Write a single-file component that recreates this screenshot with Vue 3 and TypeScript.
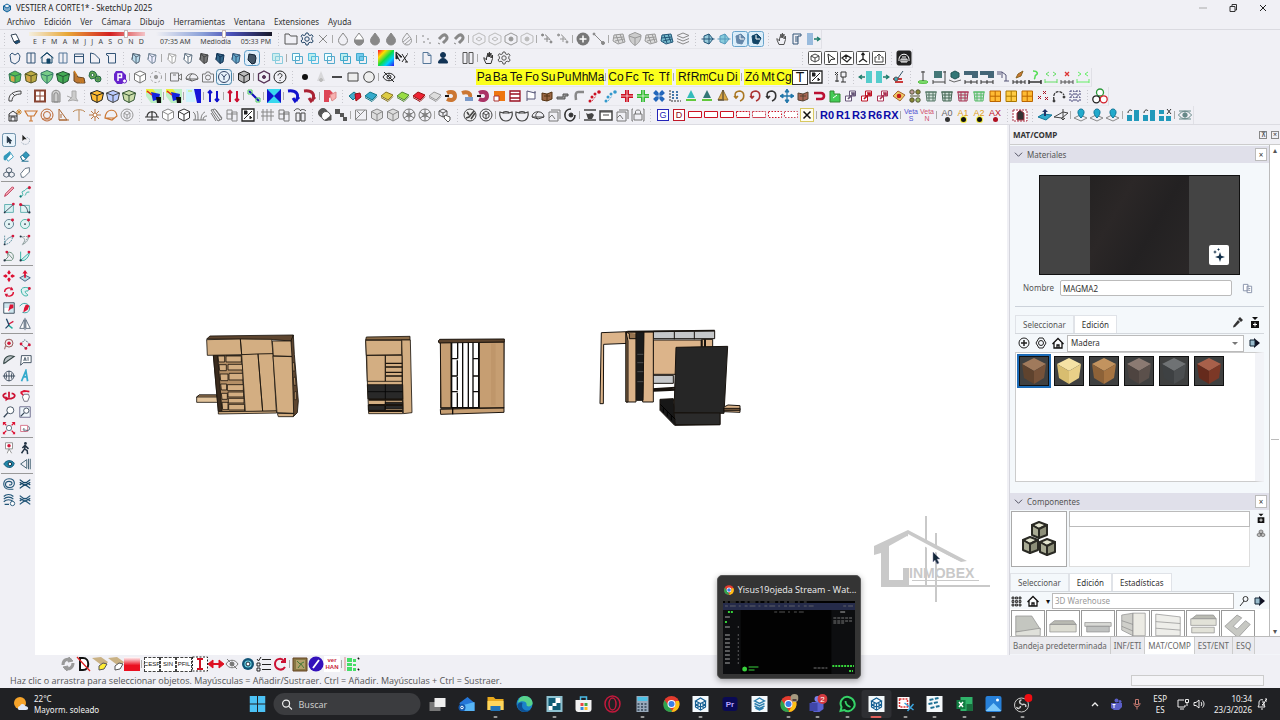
<script setup lang="ts">
import { ref } from 'vue'

interface Tool {
  kind: 'icon' | 'sep' | 'grip' | 'wide' | 'label'
  name: string
  stroke: string
  fill: string
  cls: string
}

/* 16 x 16 glyphs; stroke and fill come from the token that names them */
const glyphs: Record<string, string> = {
  cube: '<path d="M8 2l5.5 2.5v6.500L8 14l-5.500-3V4.500z"/><path fill="none" d="M2.500 4.500L8 7.500l5.500-3M8 7.500V14"/>',
  shade: '<path d="M5 3.500l7 1.500-1 7-3 1.500-4-4z"/><path fill="none" d="M4 9.500l1-6 3 3.500 4-2M8 7v6.500"/>',
  shadebox: '<rect x=".5" y=".5" width="15" height="15" rx="3" fill="#e2effa" stroke="#5c9cc8"/><path d="M5 4l6 1 1 3-1 5-3 1-4-4z"/>',
  sun: '<path d="M4 4l5-1 3 6-5 2z" fill="#fff"/><path d="M7 11l5-2 1 2-4 2z" fill="#14507c"/>',
  folder: '<path fill="none" d="M2 13V3h4l1.500 2H14v8z"/>',
  gear: '<circle cx="8" cy="8" r="2.200" fill="none"/><path fill="none" d="M7 2h2l.5 1.800 1.500.7 1.800-.8 1.200 1.600-1.200 1.500v2l1.400 1-1.200 2-1.800-.6L9.500 12 9 14H7l-.5-2-1.500-.8-1.800.6-1.200-2 1.400-1v-2L2.200 5.300l1-1.600L5 4.500l1.500-.7z"/>',
  x: '<path d="M4 4l8 8M12 4l-8 8"/>',
  xbox: '<rect x="1.500" y="1.500" width="13" height="13" fill="#fffdf0" stroke="#d8c860"/><path stroke-width="1.500" d="M4.500 4.500l7 7M11.500 4.500l-7 7"/>',
  drop: '<path fill="none" d="M8 2c2 3 4.500 5 4.500 7.500a4.500 4.500 0 0 1-9 0C3.500 7 6 5 8 2z"/>',
  drophalf: '<path fill="#fff" d="M8 2c2 3 4.500 5 4.500 7.500a4.500 4.500 0 0 1-9 0C3.500 7 6 5 8 2z"/><path d="M3.500 9h9c0 3-2 5-4.500 5s-4.500-2-4.500-5z"/>',
  dropfull: '<path d="M8 2c2 3 4.500 5 4.500 7.500a4.500 4.500 0 0 1-9 0C3.500 7 6 5 8 2z"/>',
  drophatch: '<path fill="none" d="M8 2c2 3 4.500 5 4.500 7.500a4.500 4.500 0 0 1-9 0C3.500 7 6 5 8 2zM4 11l6-5M6 13l6-5"/>',
  spots: '<g stroke="none"><circle cx="4" cy="5" r="1"/><circle cx="9" cy="8" r="1"/><circle cx="5" cy="11" r="1"/><circle cx="11" cy="12" r="1"/></g>',
  magnet: '<path fill="none" stroke-width="3" d="M4 8l3-3c3-3 7 1 4 4l-3 3"/><path d="M3 12l2 1"/>',
  hex: '<path fill="none" d="M8 2l6 3v6l-6 3-6-3V5z"/><path fill="none" d="M5 8l3-2 3 2-3 2z"/>',
  hexdot: '<path fill="none" d="M8 2l6 3v6l-6 3-6-3V5z"/><circle cx="8" cy="8" r="2"/>',
  node: '<path fill="none" stroke-dasharray="2 1" d="M3 4h4l5 6"/><path d="M8 5v6M5 8h6"/><circle cx="3.500" cy="4" r="1"/><circle cx="12" cy="11" r="1"/>',
  plus: '<circle cx="8" cy="8" r="6.500" stroke="none"/><path stroke="#fff" stroke-width="1.500" d="M8 4.500v7M4.500 8h7"/>',
  line: '<path d="M3 3l9 9"/><circle cx="3" cy="3" r="1"/><circle cx="12" cy="12" r="1.500"/>',
  mesh: '<path d="M3 4l9-1 2 8-7 2-5-3z"/><path fill="none" d="M2.500 7l10-1M5 4l3 8M9 3l3 8M4 10l9-2"/>',
  layers: '<path fill="none" d="M8 2l6 2.500L8 7 2 4.500zM2 7.500L8 10l6-2.500M2 10.500L8 13l6-2.500"/>',
  plane: '<path d="M4 5l5-2 4 5-4 5-5-2z"/><path fill="none" d="M1.500 8h13M9 3v10"/>',
  planebox: '<rect x=".5" y=".5" width="15" height="15" rx="2" fill="#dceefa" stroke="#6aa5cc"/><path d="M4 5l5-2 4 4-3 6-5-1z"/><path d="M8 4v4h4" stroke="#fff"/>',
  scroll: '<path fill="none" d="M4 3h8v2H9v8H4zM6 6h3M6 8h3M6 10h3"/>',
  hand: '<path fill="none" d="M4 9l2 4.500h5l1.500-5V5l-1.500 3V3L9.500 7V2L8 7V3L6.500 8v2L4 7.500z"/>',
  house: '<path fill="none" d="M3 7l5-4 5 4v6H3zM1.500 8L8 2.500 14.500 8"/><path d="M8 13V9h3v4z"/>',
  view: '<path fill="none" d="M3.500 4h9v9h-9zM3.500 6.500h9"/>',
  viewl: '<path fill="none" d="M4 3h8v10H4zM8 3v10"/>',
  iso: '<path fill="none" d="M3 5l2-2 3 2 3-2 2 3-1 5-4 3-4-2z"/>',
  chamfer: '<path fill="none" d="M3.500 13V3l4 1 5 5v4z"/>',
  corner: '<path fill="none" d="M3.500 5V3.500h9v9.500h-7V6z"/>',
  boolean: '<path d="M3.500 3.500h7v7h-7z"/><path fill="none" d="M6.500 6.500h7v7h-7z"/>',
  rainbow: '<defs><linearGradient id="rb" x2="1" y2="1"><stop stop-color="#f03"/><stop offset=".25" stop-color="#fd0"/><stop offset=".5" stop-color="#1d4"/><stop offset=".72" stop-color="#0cf"/><stop offset="1" stop-color="#31e"/></linearGradient></defs><path stroke="none" fill="url(#rb)" d="M0 0h16v16H0z"/>',
  arrows: '<path d="M2 2v7l2-1 2 3M2 2l6 5H6"/><path fill="none" d="M8 4l5 8M8 12l5-7M11 12h3M13 4h1"/>',
  page: '<path fill="none" d="M4 2.500h5l3 3v8H4zM9 2.500v3h3"/>',
  person: '<circle cx="8" cy="5" r="2.500"/><path d="M3.500 13c0-6 9-6 9 0z"/>',
  mirror: '<path fill="none" d="M3 2.500h4v11H3zM9 2.500h4v11H9z"/>',
  bcube: '<rect x="1.500" y="1.500" width="13" height="13" rx="1" fill="#fff" stroke="#555"/><path fill="none" d="M8 4l4 2v4l-4 2-4-2V6zM4 6l4 2 4-2M8 8v4"/>',
  bcursor: '<rect x="1.500" y="1.500" width="13" height="13" rx="1" fill="#fff" stroke="#555"/><path fill="none" d="M5 4l7 5-4 .5L6 13z"/>',
  bpaint: '<rect x="1.500" y="1.500" width="13" height="13" rx="1" fill="#fff" stroke="#555"/><path fill="none" stroke-width="1.300" d="M3 8l4-3 5 3-4 4zM7 5v4"/>',
  baxes: '<rect x="1.500" y="1.500" width="13" height="13" rx="1" fill="#fff" stroke="#555"/><path fill="none" stroke-width="1.300" d="M8 3v6l-4 3M8 9l4 3M6.500 5L8 3l1.500 2"/>',
  bshare: '<rect x="1.500" y="1.500" width="13" height="13" rx="1" fill="#fff" stroke="#555"/><path fill="none" d="M6 7H4v5h8V7h-2M8 10V4M6 6l2-2 2 2"/>',
  gauge: '<rect x="1" y="1" width="14" height="14" rx="1.500"/><path stroke="#fff" fill="none" d="M3 11c-1-9 11-9 10 0M5 12V9h6v3zM7 9v3M9 9v3M6 7h4"/>',
  box3: '<path d="M1.500 5L8 2.500 14.500 5 13 12l-5 2.500L3 12z"/><path fill="none" d="M1.500 5L8 7.500 14.500 5M8 7.500v7"/>',
  openbox: '<path d="M2 5l6-3 6 3-1 7-5 2-5-2z"/><path fill="#d9a54a" stroke="none" d="M4 7l4 1v5l-4-1z"/><path fill="none" d="M2 5l6 2 6-2M8 7v7"/>',
  shield: '<path d="M8 1.500L14 4c0 5-2 8-6 10.500C4 12 2 9 2 4z"/><path fill="none" d="M2 5l6 2 6-2M8 7v7"/>',
  broom: '<path d="M3 3l4 5 6 1 1 5H6L3 12z"/><path stroke="#c77b22" stroke-width="1.500" d="M3 2l3 5M8 9l2 5M11 9l1 5"/>',
  gears: '<path d="M5 2l3 1 2 3-2 3-4 1-2-3 1-4z"/><circle cx="11" cy="10" r="3"/><circle cx="5.500" cy="6" r="1.500" fill="#fff"/><circle cx="11" cy="10" r="1" fill="#fff"/>',
  plogo: '<path stroke="none" d="M4 2h6l4 4v5l-4 4H5l-3-4V5z"/><path stroke="#fff" fill="none" stroke-width="1.500" d="M6 12V5h3.500v3.500H6"/><circle cx="12.500" cy="12" r="2" fill="#fff" stroke="#6a22c8"/>',
  target: '<circle cx="8" cy="8" r="5.500" fill="none" stroke-dasharray="2 2"/><circle cx="8" cy="8" r="1.700"/>',
  film: '<path fill="none" d="M2.500 4h8v8h-8zM10.500 7l3-2v6l-3-2M5 6h3"/>',
  dome: '<path fill="none" d="M2 10c0-7 12-7 12 0l-6 2zM2 10h12M8 5c-3 2-3 5 0 7"/>',
  camera: '<path fill="none" d="M2.500 5h3l1-2h3l1 2h3v8h-11z"/><circle cx="8" cy="8.500" r="2.500" fill="none"/>',
  vbox: '<rect x=".5" y=".5" width="15" height="15" rx="3" fill="#e6f1fa" stroke="#4a86aa"/><circle cx="8" cy="8" r="5.500" fill="none"/><path fill="none" d="M5.500 5L8 8l2.500-3M8 8v3"/>',
  target6: '<path fill="none" stroke-width="1.300" d="M8 2l5.500 3v6L8 14l-5.500-3V5z"/><circle cx="8" cy="8" r="1.500"/>',
  help: '<circle cx="8" cy="8" r="6" fill="none"/><path fill="none" d="M6 6.500C6 4 10 4 10 6.500 10 8 8 8 8 9.500M8 11v1"/>',
  dot: '<circle cx="8" cy="8" r="3" stroke="none"/>',
  spray: '<path stroke="none" d="M8 2l4 10H4z" opacity=".45"/><circle cx="8" cy="11" r="1.500"/>',
  dash: '<path stroke-width="1.500" d="M3 8h10"/>',
  rect: '<path d="M3 4h10v8H3z"/>',
  circle: '<circle cx="8" cy="8" r="5.300"/>',
  eyeoff: '<path fill="none" d="M2 8c3-5 9-5 12 0-3 5-9 5-12 0zM3 3l10 10"/><circle cx="8" cy="8" r="2"/>',
  arch: '<path fill="none" d="M2 13C1 7 6 3 14 3v3C9 6 5 8 5 13zM5 5l3 3"/>',
  window: '<path d="M3 2.500h10v11H3z" fill="#fff" stroke-width="2"/><path d="M8 2v12M3 8h10"/>',
  door: '<path d="M4 14V6c0-5 8-5 8 0v8z"/><path fill="none" d="M6 14V7c0-3 4-3 4 0v7z"/>',
  stair: '<path d="M8 3h4v7l2 3-5-1-5 1 4-4z"/><path fill="none" d="M3 8l5 2"/>',
  puzzle: '<path fill="#bdf0c4" stroke="none" d="M0 1h16v14H5L0 8z"/><path fill="#e9ef3c" stroke="none" d="M0 1h7l3 4H0z"/><path fill="#1322dd" stroke="none" d="M5 4l9 2-1 5-6 2z"/><path stroke="#e0202a" stroke-width="1.500" d="M1 3l5 4"/><path fill="#111" stroke="none" d="M10 9h5v6h-4z"/>',
  bluebar: '<path fill="#cff4ff" stroke="none" d="M0 1h9v13H0z"/><path fill="#1616d8" stroke="none" d="M8 1h7v14h-4z"/><path stroke="#c8f04a" d="M2 3h4"/>',
  updown: '<path stroke-width="2" fill="none" d="M4 14V3M2 5l2-2 2 2M11 3v11M9 11l2 2 2-2"/>',
  diag: '<path stroke-width="2" d="M3 3l10 10"/><path stroke="#50d060" fill="none" d="M2 2h4v4H2zM10 10h4v4h-4z"/>',
  bow: '<path fill="#38d8ee" stroke="none" d="M1 1h14v14H1z"/><path stroke="none" d="M1 1l7 7-7 7zM15 1L8 8l7 7z"/>',
  bend: '<path fill="none" stroke-width="3" d="M2 3c8-1 12 3 8 10M13 9l-4 4-2-3"/>',
  blade: '<path stroke="none" d="M2 2h6l5 5-6 3v4H2z"/><path d="M8 7l6-3v6l-4 3z" fill="#f8b0b0" stroke="#d88"/>',
  slab: '<path d="M2 8l5-4 7 3-5 5z"/><path fill="none" d="M2 9.500l7 4 5-5"/>',
  slabred: '<path d="M2 8l5-4 4 3-5 5z"/><path fill="#d81a3a" stroke="#911" d="M8 6l5-1 1 4-5 4z"/>',
  curl: '<path fill="none" stroke-width="4" d="M4 5c4-2 8-1 8 3s-4 5-8 3"/><path fill="#111" stroke="none" d="M2 7h4v2H2z"/>',
  curlblue: '<path fill="none" stroke-width="4" d="M3 5c5-2 9 0 8 4"/><path fill="#7a99c8" stroke="none" d="M6 9h8v4H6z"/>',
  osq: '<path stroke="none" d="M3 3h11v10H3z"/><path fill="#fff" stroke="#a33" d="M3 8h5v5H3z"/>',
  shelf: '<path fill="#fff" d="M3 3h10v10H3z" stroke-width="1.300"/><path stroke-width="1.300" d="M3 6h10M3 10h10"/>',
  flag: '<path fill="#fff" d="M4 13V3l8 2V3M4 11h8V4"/>',
  crate: '<path d="M3 5l5 1 5-2v7l-5 2-5-1z"/><path fill="none" d="M8 6v7M5 8h6"/>',
  pipe: '<path d="M2 9h6V6h5v2h-3v3H2z"/>',
  elbow: '<path fill="none" stroke-width="2.500" d="M13 4H7c-2 0-3 2-2 8"/>',
  trail: '<g stroke="none"><circle cx="3" cy="13" r="1.500"/><circle cx="5" cy="9" r="1.500"/><circle cx="8" cy="6" r="1.500"/><circle cx="12" cy="4" r="1.800"/></g><path stroke-dasharray="1 1" d="M5 13l4-5"/>',
  bigplus: '<path stroke="none" d="M6 2h4v4h4v4h-4v4H6v-4H2V6h4z"/><path stroke="#fff" stroke-width=".7" d="M8 2v12M2 8h12"/>',
  bigx: '<path stroke-width="4" d="M3.500 3.500l9 9M12.500 3.500l-9 9"/><path stroke="#fff" stroke-width=".6" d="M3 8h10M8 3v10"/>',
  array: '<g stroke="none"><path d="M5 3h2v2H5zM9 3h2v2H9zM5 6h2v2H5zM9 6h2v2H9zM5 9h2v2H5zM9 9h2v2H9z"/></g><path fill="none" stroke="#333" stroke-dasharray="2 1" d="M3 2v11h11"/>',
  cone: '<path stroke="none" d="M8 2l4 8H4z"/><path stroke="#62c83c" stroke-width="2" d="M3 12h10"/>',
  prism: '<path d="M8 2l5 10H3z"/><path stroke="#333" d="M8 2v11M3 12h4"/>',
  hook: '<path fill="none" stroke-width="1.600" d="M9 13c5-2 5-9 0-10C4 3 3 7 5 9M3 8l2 2 2-2"/>',
  move: '<path stroke-width="1.300" d="M8 2v12M2 8h12"/><path d="M8 1l2 3H6zM8 15l2-3H6zM1 8l3-2v4zM15 8l-3-2v4z"/>',
  ubend: '<path fill="none" stroke-width="2.600" d="M3 5h7c4 0 4 6 0 6H5"/>',
  lshape: '<path d="M3 3h4v3h6v8H3z"/><path stroke="#fff" fill="none" d="M6 10l4-3"/>',
  pair: '<path fill="#fff" d="M2.500 8h6v5h-6zM6.500 3h6v5h-6z"/><path stroke-width="1.700" fill="none" d="M5 11l6-6M8 5h3v3"/>',
  gem: '<path d="M2 8l5-5 7 4-5 6z"/><circle cx="8" cy="8" r="2.300" fill="#c41b1b" stroke="none"/>',
  fourdots: '<circle cx="5" cy="4" r="2.200" fill="#b99"/><circle cx="11" cy="4" r="2.200"/><circle cx="5" cy="12" r="2.200"/><circle cx="11" cy="12" r="2.200" fill="#9b6"/><path fill="none" d="M3 8h10"/>',
  net: '<path fill="#d4e2dc" d="M3 4h10l-1 9H4z"/><path fill="none" d="M2 4h12M4 7h9M4 10h8M6 4v9M10 4v9"/>',
  grid: '<path d="M3 3h10.500v10.500H3z"/><path fill="none" d="M8.200 3v10.500M3 8.200h10.500"/>',
  xs: '<path d="M3 8l3 3M6 8l-3 3M8 3l3 3M11 3L8 6M10 9l3 3M13 9l-3 3"/>',
  arcdots: '<path fill="none" stroke-dasharray="3 1" stroke-width="1.300" d="M3 12C1 3 9 1 13 7"/><circle cx="13" cy="9" r="1"/><circle cx="3" cy="13" r="1"/>',
  squares: '<path fill="none" d="M3 3h4v4H3zM9 3h4v4H9zM3 9h4v4H3zM9 9h4v4H9z" stroke-dasharray="2 1"/>',
  trio: '<g fill="#fff" stroke-width="1.300"><circle cx="8" cy="4.500" r="3.500" stroke="#2b9a3a"/><circle cx="4.300" cy="11.300" r="3.500" stroke="#222"/><circle cx="11.700" cy="11.300" r="3.500" stroke="#d31f2a"/></g>',
  homestar: '<path fill="none" d="M2 14V7l4-3 4 3v7zM4 14v-4h4v4M2 9h8"/><path stroke="#c98a3a" d="M12 2v6M9 5h6M10 3l4 4M14 3l-4 4"/>',
  funnel: '<path fill="none" stroke-width="1.200" d="M2 4h12l-3 5H5zM8 9v5M6 14h4"/>',
  ring: '<circle cx="8" cy="8" r="6" fill="none"/><circle cx="8" cy="8" r="3.500" fill="none"/><path d="M3 12h10"/>',
  wedge: '<path fill="none" d="M4 2l8 11H4zM4 13h10M6 7v4"/>',
  lamp: '<path fill="none" d="M2 5c2-3 10-3 12 0M8 3v11"/>',
  star: '<path d="M8 2v12M2 8h12M4 4l8 8M12 4l-8 8"/><circle cx="8" cy="8" r="2" fill="#fff"/>',
  halfdome: '<path fill="none" stroke-width="1.200" d="M2 11C3 1 13 1 14 9l-5 4-7-2zM2 11h10"/>',
  hexball: '<circle cx="8" cy="8" r="6" fill="none"/><path fill="none" d="M8 4l3 2v4l-3 2-3-2V6zM5 6l3 2 3-2M8 8v4"/>',
  helm: '<path fill="none" stroke-width="1.200" d="M1 10h14M3 10c0-7 10-7 10 0M8 4v9M3 13h10"/>',
  grass: '<path fill="none" d="M3 13C4 9 3 6 1 5M6 13c0-5 0-7-1-9M9 13c0-5 2-7 4-8M11 13c0-3 2-4 4-4M1 13h13"/>',
  hatch: '<path fill="none" d="M3 3l4-1 7 10-4 2zM3 6l5 8M5 3l7 10M8 3l6 8"/>',
  panels: '<path fill="none" d="M3 3h5v9H3zM8 5h5v9H8zM3 7h10"/>',
  notebox: '<path fill="#fff" stroke-width="1.300" d="M2 2h12v12H2z"/><path d="M4 12l8-8M4 4h3v3H4M10 12V9l2 2"/>',
  gridder: '<path fill="none" d="M3 2v12M7 2v12M11 2v12M1 5h13M1 9h13"/>',
  eyes: '<path fill="none" d="M4 6h4v8H4zM9 6h4v8H9zM2 4c2-3 5-3 7 0M8 4c1-2 4-2 6 0"/>',
  blob: '<circle cx="6" cy="6" r="4.500"/><circle cx="9" cy="9" r="4.500" fill="#fff"/><path d="M8 13h6v-5"/>',
  checks: '<path stroke="none" d="M2 2h5v5H2zM7 6h4v4H7zM10 10h4v4h-4z"/>',
  edit: '<path fill="none" d="M2.500 3h11v10h-11zM3 12l9-9M4 4l3 3"/>',
  web: '<circle cx="8" cy="8" r="6" fill="none"/><circle cx="8" cy="8" r="2" fill="none"/><path d="M3 5l10 6M13 5L3 11M8 2v12"/>',
  cubehand: '<path fill="none" d="M6 2l4 2v4L6 10 2 8V4zM2 4l4 2 4-2M6 6v4"/><path fill="#fff" d="M8 8l5 2v3l-2 2-4-4z"/>',
  swirl: '<circle cx="8" cy="8" r="6" fill="#eee"/><path fill="none" stroke-width="1.600" d="M4 11l3-1 5-6M5 5l2 3M9 12l4-6"/>',
  pot: '<path fill="none" stroke-width="1.200" d="M2 5l3 1c0-2 6-2 6 0l3-1c1 4-1 9-6 9S1 9 2 5zM5 6h6"/>',
  frames: '<path fill="none" d="M5 3h9v9M3 5h9v9H3zM3 11l3-3 3 4"/>',
  orbit: '<path fill="none" stroke-width="1.600" d="M9 2C1 2 1 13 8 14M13 8c0 4-3 6-5 6"/><circle cx="9" cy="8" r="2"/>',
  teabox: '<path d="M2 3h12M2 13h12" stroke-width="1.500"/><path stroke="none" d="M4 6l2 1 4-1 2 2-2 4H6z"/>',
  screen: '<path fill="#fff" d="M2 4h12v9H2z" stroke-width="1.500"/><path d="M2 5h12M5 8h6"/>',
  lock: '<path fill="none" d="M4 7h8v6H4zM5.500 7V4.500c0-2 5-2 5 0V7M3 2h-1v12h1M13 2h1v12h-1"/>',
  bar: '<path fill="#fff" d="M1.500 4.500h13v6h-13z"/>',
  barhalf: '<path fill="#fff" stroke-dasharray="2 1" d="M1.500 4.500h13v6h-13z"/><path d="M2 10.500h12"/>',
  bardot: '<path fill="#fff" stroke-dasharray="1.500 1.500" d="M1.500 4.500h13v6h-13z"/>',
  tank: '<path fill="#fff" stroke-dasharray="2 1" d="M1 3h14v11H1z"/><path fill="#333" d="M5 13V6l3-3 4 3v7z"/>',
  lift: '<path d="M1 10l5-3 9 1-6 5z"/><path fill="#236" d="M8 2l3 3H9v4H7V5H5z" stroke="none"/>',
  fall: '<path fill="none" d="M1 10l9-5 5 1-6 5zM10 2v11M8 11l2 2 2-2"/>',
  pinblob: '<path fill="none" stroke="#888" d="M1 11l6-3 7 3-6 3z"/><path d="M8 11C3 6 5 2 8 2s5 4 0 9z"/>',
  tiles: '<path stroke="none" d="M2 8h5v6H2zM9 3h5v11H9z"/><path stroke="#333" fill="none" d="M3 6c0-3 3-4 4-2"/>',
  tilesx: '<path stroke="none" d="M2 3h5v4H2zM2 9h5v5H2zM9 9h5v5H9z"/><path stroke="#333" d="M10 2l4 5M14 2l-4 5"/>',
  eye: '<path fill="none" d="M1.500 8C5 3 11 3 14.500 8 11 13 5 13 1.500 8zM2 4h12M2 12h12"/><circle cx="8" cy="8" r="2.200"/>',
  inout: '<path stroke="none" d="M8 2h6v12H8z"/><path stroke="#1c7b6a" fill="none" stroke-width="1.300" d="M1 8h6M4 6L1 8l3 2"/>',
  outin: '<path stroke="none" d="M2 2h6v12H2z"/><path stroke="#1c7b6a" fill="none" stroke-width="1.300" d="M9 8h6M12 6l3 2-3 2"/>',
  brush: '<path stroke="#cc3b3b" stroke-width="2" fill="none" d="M3 10h9M5 13h8"/><path stroke="#356" d="M13 2L8 9"/><circle cx="6" cy="10" r="2" fill="#4ab"/>',
  post: '<ellipse cx="8" cy="13" rx="5" ry="1.500" fill="#7ddd6d" stroke="#5ac04a"/><path fill="none" stroke="#444" d="M8 12V2M6 3h4"/>',
  dim: '<path stroke="none" d="M3 2h8v7H3z"/><path stroke="#444" fill="none" d="M2 13h12M2 11v4M14 2v13M12 3h3"/>',
  dimcube: '<path d="M8 2l4 2v4l-4 2-4-2V4z"/><path stroke="#666" fill="none" d="M2 11l5 2 7-2"/>',
  dimbar: '<path stroke="none" d="M1 2h14v7H9V6H1z"/><path stroke="#333" fill="none" d="M2 13h12M2 11v4M8 11v4M14 11v4"/>',
  dimleaf: '<path d="M5 9l2-4 5-3-2 5z"/><path stroke="#333" fill="none" d="M2 13h12M2 11v4M6 11v4M10 11v4M14 11v4"/>',
  dimloop: '<path fill="none" stroke-width="1.500" d="M6 2c5 0 5 3 3 4s0 3-2 4"/><path stroke="#333" fill="none" stroke-width="1.500" d="M2 13h12M2 11v4M14 11v4"/>',
  dimarr: '<path fill="none" d="M6 3L3 5l3 2M10 3l3 2-3 2M2 13h12M2 10v4M14 10v4"/>',
  dimx: '<path stroke-width="1.300" d="M6 3l4 4M10 3L6 7"/><path stroke="#555" fill="none" d="M2 13h12M2 11v4M6 11v4M10 11v4M14 11v4"/>',
  dimin: '<path fill="none" d="M3 3l3 2-3 2M13 3l-3 2 3 2M2 13h12M2 10v4M14 10v4"/>',
  robot: '<path fill="none" d="M2 3h5l4 3v6M2 5h4M9 12h5M7 3v6"/>',
  flow: '<path fill="none" d="M2 3l3 3M5 3L2 6M4 6v7M2 12h4M8 3h5v5H8zM10 8v5M8 13h5"/>',
  refresh: '<path fill="none" stroke-width="3" d="M3 9c0-5 4-7 8-5M13 7c0 5-4 7-8 5"/><path d="M9 1l4 4-5 1zM7 15l-4-4 5-1z"/>',
  dno: '<path fill="#fff" stroke-width="2" d="M4 2h3c7 0 7 12 0 12H4z"/><path stroke="#d22" stroke-width="1.300" d="M1 1l13 14"/>',
  board: '<path stroke="none" fill="#c9b184" d="M0 2l9-1 7 5-4 5z"/><path stroke="#555" d="M7 10l4-3 4 1-3 5-5 1z"/>',
  redfade: '<defs><linearGradient id="rf" x2="0" y2="1"><stop stop-color="#fff"/><stop offset=".6" stop-color="#ea1020"/></linearGradient></defs><path stroke="none" fill="url(#rf)" d="M0 1h16v14H0z"/>',
  ibeam: '<path fill="#fff" stroke="#222" stroke-dasharray="2 1.500" d="M.5 1h15v14H.5z"/><path stroke-width="2" d="M5 3h6M8 3v10M5 13h6"/>',
  lr: '<path stroke-width="2" d="M3 8h10"/><path d="M0 8l5-4v8zM16 8l-5-4v8z"/>',
  iris: '<circle cx="8" cy="8" r="6" stroke="none"/><circle cx="8" cy="8" r="3.600" fill="#6ed4e4" stroke="none"/><circle cx="8" cy="8" r="2" fill="#fff" stroke="#123"/>',
  list: '<path fill="none" d="M1 3l1.500 2L5 1M1 7h3v3H1zM1 12h3v3H1zM6 3.500h9M6 8.500h9M6 13.500h9"/>',
  redo: '<path fill="none" stroke-width="2" d="M13 11c-3 5-10 2-10-3s6-7 9-3M13 2v4H9"/>',
  map: '<path d="M1 2h14v13H1z"/><path fill="#b2a06a" stroke="none" d="M4 4h9v9H4z"/><path stroke="#467a3a" fill="none" d="M5 5l3 3 4-2M6 12l3-4 3 4"/>',
  pen: '<circle cx="8" cy="8" r="7.500" stroke="none"/><path stroke="#fff" stroke-width="1.800" d="M5 12l6-8"/>',
  leds: '<path fill="none" stroke="#d88" d="M1 1v14"/><g stroke="none"><path d="M3 2h5v4H3zM3 7h5v3H3zM3 11h5v4H3zM9 3h3v3H9zM9 8h3v2H9zM9 12h3v3H9z"/></g><path stroke="#111" stroke-width="2" d="M14 3l1-1M14 14l1-1"/>',
  /* drawing palette */
  sel: '<rect x=".5" y=".5" width="15" height="15" rx="2.500" fill="#eaf4fb" stroke="#567f9c"/><path d="M6 4v7l2-1.500 1 2.500 1-.5-1-2.500h2z"/>',
  lasso: '<path stroke="none" d="M5 2v7l2-2h3z"/><path fill="none" stroke="#89a" stroke-dasharray="1 1" d="M10 5c5 1 4 7-1 8-4 0-5-2-5-3"/>',
  bucket: '<path fill="#fff" d="M3 8l6-5 4 6-6 5z"/><path stroke="none" d="M2 8l7-5 1 3-6 7C1 13 2 10 2 8z"/>',
  eraser: '<path d="M3 9l6-6 4 4-6 6H5z"/><path fill="#fff" d="M3 9l2-2 4 4-2 2H5zM4 14h8"/>',
  clover: '<path fill="none" d="M8 3l3 1.500v3L8 9 5 7.500v-3zM5 8l3 1.500v3L5 14l-3-1.500v-3zM11 8l3 1.500v3L11 14l-3-1.500v-3z"/>',
  tag: '<path fill="#fff" d="M3 10l5-6 5-1v5l-6 6H4z"/>',
  pencil: '<path d="M3 13l1-3 8-8 1.500 1.500-8 8z" fill="#f5b8c2"/>',
  scribble: '<path fill="none" d="M3 13c6-1-1-5 3-6s2-4 7-3M8 12c2-2 0-4 5-4"/><circle cx="3" cy="13" r="1" fill="#234"/><circle cx="13" cy="3" r="1.300" stroke="#c13" fill="#c13"/>',
  sq: '<path fill="#d9f0f2" d="M3 4h10v9H3z"/><path d="M3 13l10-9" stroke="#345"/><circle cx="3" cy="13" r="1" fill="#234" stroke="none"/><circle cx="13" cy="3.500" r="1.600" stroke="none" fill="#d4183c"/>',
  rot: '<path fill="#e2f3f4" d="M3 5h10v8H3z"/><path d="M3 5c5-1 8 3 8 8" fill="none" stroke="#345"/><g stroke="none"><circle cx="3" cy="4" r="1.800" fill="#d4183c"/><circle cx="13" cy="13" r="1.300" fill="#234"/></g>',
  circ: '<circle cx="8" cy="8" r="5.200" fill="#e2f3f4"/><circle cx="8" cy="8" r="1" fill="#234" stroke="none"/><circle cx="12" cy="3.500" r="1.700" stroke="none" fill="#d4183c"/>',
  arcv: '<path fill="none" d="M3 3v10c5 0 9-4 9-9" stroke-dasharray="2 1"/><path fill="none" d="M3 13c0-4 4-8 9-9"/><circle cx="3" cy="13" r="1.100" fill="#234" stroke="none"/><circle cx="12.500" cy="3.500" r="1.600" stroke="none" fill="#d4183c"/>',
  arct: '<path fill="none" d="M3 4h9L5 14" stroke-dasharray="2 1"/><path fill="none" d="M3 4c5 1 6 5 2 9M5 13c4-1 7-5 7-9"/><circle cx="3" cy="4" r="1.100" fill="#234" stroke="none"/><circle cx="12.500" cy="3.500" r="1.600" stroke="none" fill="#d4183c"/>',
  arcc: '<path fill="none" d="M6 4c7-2 9 6 5 9H3l4-4zM6 4l6 7"/><circle cx="3" cy="13" r="1.300" fill="#234" stroke="none"/><circle cx="5.500" cy="3.500" r="1.600" stroke="none" fill="#d4183c"/>',
  pie: '<path fill="#d5eef0" d="M3 3v10h4c4-2 6-6 6-9L3 13"/><circle cx="3" cy="13" r="1.300" fill="#234" stroke="none"/><circle cx="12.500" cy="3.500" r="1.600" stroke="none" fill="#d4183c"/>',
  cross: '<path stroke="none" d="M8 1l2 3-1 2H7L6 4zM8 15l2-3-1-2H7l-1 2zM1 8l3-2 2 1v2l-2 1zM15 8l-3-2-2 1v2l2 1z"/>',
  push: '<path fill="#bfe1e6" stroke="#357" d="M2 10l6-3 6 3-6 4z"/><path stroke="none" d="M8 1l3 4H9v5H7V5H5z"/>',
  spin: '<path fill="none" stroke-width="1.600" d="M3 8c0-5 6-6 9-3M13 8c0 5-6 6-9 3"/><path d="M11 2l2 4h-4zM5 14l-2-4h4z" stroke="none" fill="#d4183c"/>',
  follow: '<path fill="#dff1f3" d="M4 8c-2-6 6-6 9-4l-2 3c-5-1-2 3 0 4s-5 4-7-3z"/><circle cx="13" cy="4" r="1.600" fill="#d4183c" stroke="none"/>',
  scale: '<path fill="#cfe6ee" stroke="#345" d="M2 2h12v12H2z"/><path stroke="none" fill="#fff" d="M3 8h5v5H3z"/><path stroke="none" d="M8 8l1-4h4v4l-3 1-3 3z"/>',
  offset: '<path fill="none" stroke="#2a9a9a" d="M2 6c3-5 10-4 11 1M5 13c7 2 9-3 8-7"/><path stroke="none" d="M7 8l2-4 4 1-2 5-5 3z"/>',
  axes: '<path stroke-width="1.500" d="M7 9l5 4"/><path stroke="#d4183c" stroke-width="1.500" d="M8 8l5-3"/><path fill="none" stroke="#246" stroke-width="1.500" d="M5 2l3 7-4 4"/>',
  flip: '<path fill="#fff" d="M7 3v10H2zM9 3v10h5z"/><path d="M8 1v14"/>',
  tape: '<circle cx="8" cy="7" r="4.500" fill="#eee"/><circle cx="8" cy="7" r="2" fill="#d4183c" stroke="none"/><path d="M4 10l-1 4"/>',
  dimn: '<path fill="none" d="M3 8l5-5 5 5-4 5z" stroke-dasharray="2 1"/><g stroke="none" fill="#d4183c"><circle cx="3.500" cy="8" r="1.600"/><circle cx="13" cy="9" r="1.600"/><circle cx="9" cy="13" r="1.600"/></g>',
  protr: '<path fill="#b8c0c4" stroke-width="1.200" d="M2 12C2 4 8 2 14 4L8 8c-2 1-3 3-6 4z"/>',
  a1: '<path fill="#fff" d="M4 3h11v8H6l-3 3z"/><path fill="none" stroke-width=".9" d="M6.500 9L8 5l1.500 4M7 8h2M11.500 9V5l-1 1"/>',
  compass: '<circle cx="8" cy="8" r="5.500" fill="none"/><path fill="none" d="M8 2v12M1 8h14M5 5v6M11 5v6"/>',
  a3d: '<path stroke-width="2" fill="none" d="M4 14L9 2l2 12M6 9h5"/>',
  orb: '<path fill="none" stroke-width="2" d="M5 5c-6 1-4 6 3 6s9-5 3-6"/><path stroke="none" d="M7 3h2v7H7zM4 8l4 3-4 3z"/>',
  pan: '<path fill="#fff" stroke="#667" d="M5 9l2 5h4l2-5-1-3H7z"/><path stroke-width="1.800" d="M3 4l4-2 6 1M3 4l3 3"/>',
  mag: '<circle cx="9.500" cy="6" r="4" fill="#fff"/><path stroke-width="1.500" d="M6.500 9L2 14"/>',
  magbox: '<path fill="#eef5fa" stroke="#668" d="M2 2h12v12H2z"/><circle cx="9.500" cy="6.500" r="3" fill="#fff"/><path stroke-width="1.500" d="M7 9l-4 4"/>',
  extents: '<circle cx="8" cy="8" r="3" fill="#fff" stroke="#567"/><path stroke-width="1.500" d="M2 2l3 3M14 2l-3 3M2 14l3-3M14 14l-3-3"/><path stroke="none" d="M1 1h4L1 5zM15 1h-4l4 4zM1 15h3l-3-3zM15 15h-3l3-3z"/>',
  back: '<path fill="#fff" stroke="#d56a82" d="M3 5h8v7H3z"/><path fill="none" stroke="#456" d="M7 10c5 2 8 0 5-4M7 8l-1 2 2 2"/>',
  spot: '<path fill="#fff" d="M4 2h8v7H4zM6 14l2-5 3 5"/><circle cx="8" cy="5.500" r="2" fill="#d4183c" stroke="none"/>',
  walk: '<circle cx="8.500" cy="2.800" r="1.600" stroke="none"/><path fill="none" stroke-width="1.700" d="M8.500 5L7.500 9l3 2 .5 4M7.500 9L4 14M5 8l3-3 4 4"/>',
  look: '<path d="M2 8C5 3 11 3 14 7c-1 6-8 7-12 1z"/><circle cx="9" cy="8" r="2" fill="#fff" stroke="#123"/>',
  section: '<path fill="none" d="M10 3L3 8l7 5zM12 2v12M14 2v12"/>',
  spiral: '<path fill="none" stroke-width="1.300" d="M13 14H8C0 14 0 2 8 2s8 10 1 10-6-7-1-7 4 5 0 4"/>',
  weave: '<path fill="none" stroke-width="1.400" d="M2 3c6 5 6 5 12 0M2 6c6 4 6 4 12 0M2 9c6-4 6-4 12 0M2 13c6-5 6-5 12 0"/>',
  stack: '<path fill="none" stroke-width="1.300" d="M2 4c3-3 8-3 11 0M2 7c3-3 8-3 11 0M2 10c3-3 8-3 11 0M3 13h5"/><circle cx="12" cy="12" r="2.500" fill="#fff"/>',
}

/* token: name.stroke.fill — "|" separator, "#" grip, "==" free space, "'text" text button */
function parse(spec: string): Tool[] {
  return spec.trim().split(/\s+/).map((t): Tool => {
    const blank = { name: '', stroke: '', fill: '', cls: '' }
    if (t === '|') return { ...blank, kind: 'sep' }
    if (t === '#') return { ...blank, kind: 'grip' }
    if (t.startsWith('==')) return { ...blank, kind: 'wide', cls: t.slice(2) }
    if (t.startsWith("'")) {
      const [name, cls] = t.slice(1).split('.')
      return { ...blank, kind: 'label', name: name.replace('_', ' '), cls }
    }
    const [name, s = '555', f = s] = t.split('.')
    return { kind: 'icon', name, stroke: '#' + s, fill: f === 'n' ? 'none' : '#' + f, cls: '' }
  })
}

const row1 = parse(`folder gear.246 x.888 | drop.888 drophalf.888 dropfull.888 dropfull.888 drophatch.999 | spots.aaa magnet.888 magnet.888 |
 hex.bbb hex.bbb hexdot.999 hexdot.bbb | node.888 node.999 | plus.777 line.888 | mesh.999.ddd shield.999.ccc mesh.999.ddd mesh.257.7bc layers.888 #
 plane.257.9cd plane.59b.8cd planebox.68a planebox.146.146 # hand.555 scroll.357 outin.9bd.9bd`)
const row2 = parse(`iso.357 viewl.357 house.146 viewl.579 view.357 chamfer.357 corner.357 # shade.567.bde shade.789.eef | shade.aaa.fff shade.678.fff
 shade.444.777 shade.135.368 shade.357.6ac shadebox.123.456 # boolean.8cd.cee | boolean.5ac.eff boolean.5bd.bee boolean.5ac.eff boolean.4ac.bee boolean.4ac.7ce #
 rainbow arrows.222 # page.579 person.135 # mirror.555 | hand.333 gear.555 ==far # bcube.444 bcursor.222 bpaint.222 baxes.222 bshare.444 # gauge.222`)
const row3 = parse(`openbox.375.5b5 openbox.552.ba4 shield.376.7c8 box3.253.4a5 broom.642.b73 gears.264.6a5 # plogo.62c | cube.777.fff target.999 |
 film.777 dome.666 camera.777 vbox.346 | cube.222.bbb | target6.535 help.222 # dot.111 spray.bbb dash.111 rect.444.eee circle.444.eee | eyeoff.222.n ==mid
 'Pa.y 'Ba.y 'Te.y 'Fo.y 'Su.y 'Pu.y 'Mh.y 'Ma.y | 'Co.y 'Fc.y 'Tc.y 'Tf.y | 'Rf.y 'Rm.y 'Cu.y 'Di.y | 'Zó.y 'Mt.y 'Cg.y 'T.t notebox.222 # flow.333 #
 inout.5cc.5cc outin.5cc.5cc brush # post dim.478.477 dimcube.255.377 dimbar.478.467 dimbar.478.467 robot.557 dimleaf.862.c73 dimloop.5d5 dimarr.6d6 dimx.d33 dimin.6e6`)
const row4 = parse(`arch.444 # window.843 door.888.ccc stair.aaa.ccc # box3.222.fb3 box3.444.bcf box3.353.cda # puzzle | puzzle | bluebar | updown.11c | updown.c13 |
 diag.11b | bow.11c | bend.11c bend.a23 | blade.d45 # slabred.178.4ac slab.178.3ac slab.872.dc4 slab.583.9d4 slab.911.e23 slab.999.ddd curl.c73 curlblue.c73 curl.a36
 osq.e71 shelf.912 flag.557 crate.531.964 pipe.555.999 elbow.888 trail.c12 trail.39c bigplus.c12 bigplus.3b3 bigx.26b array.47a cone.3bb cone.377 prism.973.da4
 hook.a72 hook.a33 hook.333 move.27a crate.543.a65 ubend.b13 lshape.383.4c5 pair.657 pair.b12 pair.a35 gem.a63.ec6 fourdots.553.883 net.576 net.465 net.a35 net.5b6
 grid.b60.fb3 grid.a70.fc4 grid.b60.fb3 xs.a12 arcdots.333 squares.447 # trio`)
const row5 = parse(`homestar.333 funnel.c73 ring.b63 wedge.a63 lamp.b85 star.b74 halfdome.c73 hexball.999 # helm.333 cube.888.fff cube.333.fff grass.777 hatch.777
 panels.888 notebox.222 | gridder.888 panels.777 eyes.444 # blob.555 checks.555 | edit.888 cube.888.ddd cube.888.ddd web.777 web.777 | cubehand.555 #
 swirl.444 hexball.444 | pot.444 pot.444 dome.444 frames.777 orbit.333 | teabox.444 screen.444 frames.777 lock.777 # 'G.g 'D.d bar.c12 bar.c12 bar.c12
 barhalf.c12 barhalf.c45 bardot.c12 bardot.c45 xbox.111 | 'R0.r 'R1.r 'R3.r 'R6.r 'RX.r | 'Veta_S.v 'Veta_N.w | 'A0.a0 'A1.a1 'A2.a2 'AX.ax # tank.a34 #
 lift.179.3ac fall.444 | pinblob.179.2ac pinblob.179.2ac pinblob.179.2ac | tiles.29b.29b tiles.29b.29b tilesx.29b.29b | eye.688`)
const rowsBelow = [row2, row3, row4, row5]

const bottomTools = parse(`refresh.999 dno.111 board.333.fe3 board.333.fff redfade | 'CESP.p 'SIN.p 'PFIL.p ibeam.c12 lr.d12 eyeoff.777 iris.157 list.222 redo.c13 |
 map.642.874 pen.31b 'ver_HAN.h | leds.4d6.4d6`)

const palette = [
  ['sel.234', 'lasso.222', 'bucket.39b', 'eraser.168.39b', 'clover.456.n', 'tag.567'],
  ['pencil.b24', 'scribble.2a9', 'sq.5aa', 'rot.5aa', 'circ.578', 'circ.4a9', 'arcv.589', 'arct.899', 'arcc.687', 'pie.2a9'],
  ['cross.d13', 'push.d13', 'spin.d13', 'follow.2a9', 'scale.d13', 'offset.d13', 'axes.2a9', 'flip.567'],
  ['tape.844', 'dimn.356', 'protr.344', 'a1.345', 'compass.345', 'a3d.3ac'],
  ['orb.c13', 'pan.d13', 'mag.345', 'magbox.345', 'extents.d13', 'back'],
  ['spot.888', 'walk.234', 'look.157.28a', 'section.356'],
  ['spiral.257', 'weave.146', 'stack.257', 'weave.257'],
].map(g => parse(g.join(' ')))

const menus = ['Archivo', 'Edición', 'Ver', 'Cámara', 'Dibujo', 'Herramientas', 'Ventana', 'Extensiones', 'Ayuda']
const months = ['E', 'F', 'M', 'A', 'M', 'J', 'J', 'A', 'S', 'O', 'N', 'D']
const month = ref(85)
const hour = ref(59)
const materialName = ref('MAGMA2')
const search = ref('')
const compName = ref('')
const compText = ref('')
const woods = [
  { top: '#a07a5c', left: '#5f432e', right: '#765239', on: true },
  { top: '#f5e2a4', left: '#d8bd70', right: '#e9d088', on: false },
  { top: '#c2935f', left: '#8d6238', right: '#a67442', on: false },
  { top: '#8b7a72', left: '#4e4440', right: '#5b504b', on: false },
  { top: '#6f7274', left: '#3e4143', right: '#4b4e50', on: false },
  { top: '#a8604a', left: '#652a1c', right: '#7c3826', on: false },
]
const thumbs = [
  '<path fill="#c4c6c0" d="M4 5h17l9 14-2 3H4z"/><path fill="#dfe0da" d="M4 22l26-4v8H4z"/>',
  '<path fill="#b9bab2" d="M3 14l5-4h20l3 4z"/><path fill="#dcdcd2" d="M3 14h28v8H3z"/>',
  '<path fill="#d9dad6" d="M3 12h28v4H3z"/><path fill="#bfc1c0" d="M5 16h24v6H5z"/>',
  '<path fill="#cfcfca" d="M5 4l12-2v24L5 20z"/><path fill="#ecebe4" d="M17 2h13v24H17z"/><path fill="none" d="M5 10l12 4M5 16l12 5"/>',
  '<path fill="#eeeeea" d="M4 3l26 3v20H4z"/><path fill="none" d="M4 11l26 2M4 18l26 2"/>',
  '<path fill="#b9bab2" d="M5 8l5-4h18l3 4z"/><path fill="#e2e2d8" d="M4 8h27v7H4zM5 17h24v6H5z"/>',
  '<path fill="#c7c8c3" d="M3 16L16 4l5 3-9 9 4 3 9-9 5 4-13 14z"/>',
]
const trayTabs = ['Bandeja predeterminada', 'INF/ETI', 'MAT/COMP', 'EST/ENT', 'ESQ']

const chrome = '<circle cx="10" cy="10" r="8" fill="#e33b2e"/><path fill="#2ea44f" d="M3 6l5 7 3 5C3 19 0 12 3 6z"/><path fill="#fbc116" d="M10 18l4-7V7h3.500c2 6-2 11-7.500 11z"/><circle cx="10" cy="10" r="4" fill="#fff"/><circle cx="10" cy="10" r="3" fill="#3b7de8"/>'
const sketchup = '<path fill="#f4f9fc" d="M2 2h16v16H2z"/><path fill="none" stroke="#155f93" stroke-width="1.200" d="M5 7l5-3 5 3-5 2.500zM5 7v6l5 3 5-3V7M5 10l5 3 5-3M10 9.500V16M7.500 9v6M12.500 9v6"/>'
const layout = '<path fill="#f4f9fc" d="M2 2h16v16H2z"/><path fill="none" stroke="#2c7fae" stroke-width="1.400" d="M5 7l5-3 5 3-5 2.500zM5 9.500l5 2.500 5-2.500M5 12l5 2.500 5-2.500M6 14l4 2 4-2"/>'
const apps = [
  { name: 'Vista de tareas', run: false, art: '<path fill="#777" d="M2 8h11v9H2z"/><path fill="#eee" d="M7 4h11v9H7z"/>' },
  { name: 'Correo', run: false, art: '<path fill="#2577d8" d="M3 9l8-6 7 6v8H5z"/><path fill="#58b5f5" d="M7 11l11-3v9H8z"/><circle cx="5.500" cy="13.500" r="3.500" fill="#1459ae"/><circle cx="5.500" cy="13.500" r="1.300" fill="none" stroke="#fff"/>' },
  { name: 'Explorador', run: true, art: '<path fill="#e9a91c" d="M2 3h6l2 2h8v11H2z"/><path fill="#ffd65c" d="M2 7h16v9H2z"/><path fill="#2174b8" d="M5 12h10v5H5z"/>' },
  { name: 'Edge', run: false, art: '<circle cx="10" cy="10" r="8" fill="#1a83c9"/><path fill="#58d38c" d="M5 4c7-5 14 1 13 6-1 3-6 3-6 1 1-4-5-5-9-2z"/><path fill="#0d4f93" d="M8 9c-2 6 3 9 8 7-6 5-14 0-13-5 1-2 3-3 5-2z"/>' },
  { name: 'Paneles', run: true, art: '<path fill="#8fc2d0" d="M2 2h16v16H2z"/><path fill="#0f5b74" d="M4 4h12v12H4z"/><path fill="#fff" d="M11 4h5v5h-5zM8 9h4v3H8zM4 12h4v4H4z"/>' },
  { name: 'Store', run: false, art: '<path fill="none" stroke="#4bbce6" stroke-width="1.500" d="M7 6V3h6v3"/><path fill="#f2f2f2" d="M2 6h16v9q0 3-3 3H5q-3 0-3-3z"/><path fill="#e44" d="M7 9h3v3H7z"/><path fill="#4a4" d="M11 9h3v3h-3z"/><path fill="#38d" d="M7 13h3v3H7z"/><path fill="#fb2" d="M11 13h3v3h-3z"/>' },
  { name: 'Opera', run: false, art: '<ellipse cx="10" cy="10" rx="7.500" ry="8" fill="none" stroke="#c2193c" stroke-width="1.500"/><ellipse cx="10" cy="10" rx="3.500" ry="6" fill="none" stroke="#c2193c" stroke-width="1.500"/>' },
  { name: 'Calculadora', run: true, art: '<path fill="#9ab" d="M4 2h12v16H4z"/><path fill="#4cc0e4" d="M5 3h10v4H5z"/><path stroke="#345" stroke-width="1.500" stroke-dasharray="2 1.500" d="M5 10h10M5 13h10M5 16h10"/>' },
  { name: 'Chrome', run: false, art: chrome },
  { name: 'SketchUp', run: true, art: sketchup },
  { name: 'Premiere', run: false, art: '<rect x="3" y="3" width="15" height="14" rx="3" fill="#0a0a55"/><text x="10.500" y="13" font-size="8" font-weight="700" text-anchor="middle" fill="#b9a4ff" font-family="Liberation Sans, sans-serif">Pr</text>' },
  { name: 'LayOut', run: false, art: layout },
  { name: 'Chrome perfil', run: true, art: chrome + '<circle cx="16" cy="4" r="4" fill="#a59a80"/><path fill="#544" d="M14 5h4v2h-4z"/>' },
  { name: 'Teams', run: true, art: '<circle cx="10" cy="5" r="3" fill="#7b83eb"/><path fill="#5a61cf" d="M4 8h12v7l-4 3H6z"/><path fill="#3f46a8" d="M2 9h8v8H2z"/><circle cx="15" cy="5" r="5" fill="#d33a3f"/><text x="15" y="8" font-size="8" text-anchor="middle" fill="#fff" font-family="Liberation Sans, sans-serif">2</text>' },
  { name: 'WhatsApp', run: true, art: '<path fill="#0d2016" stroke="#35d267" stroke-width="2" d="M3 17l1-4c-3-6 2-11 7-10s8 7 5 11-7 4-9 2z"/><path fill="none" stroke="#35d267" stroke-width="1.800" d="M8 7c0 4 2 5 5 6"/>' },
  { name: 'SketchUp activo', run: true, active: true, art: sketchup },
  { name: 'Recortes', run: true, art: '<path fill="#fff" d="M2 3h12v12H2z"/><path fill="none" stroke="#d33" stroke-width="1.500" stroke-dasharray="2 1" d="M4 5h8v8H4z"/><path stroke="#3ba4dd" stroke-width="1.500" d="M9 9l9 7M18 10l-6 7"/>' },
  { name: 'Cortes', run: true, art: '<path fill="#f4f8fa" d="M2 2h16v16H2z"/><path stroke="#1c6f93" stroke-width="2" stroke-dasharray="4 1.500" d="M5 6l9-2M4 10l10-2M6 14l9-2"/>' },
  { name: 'Excel', run: true, art: '<path fill="#2fb36a" d="M6 3h12v14H6z"/><path fill="#176d3c" d="M12 10h6v7h-6z"/><path fill="#107c41" d="M2 6h9v9H2z"/><path stroke="#fff" stroke-width="1.500" d="M4.500 8l4 5M8.500 8l-4 5"/>' },
  { name: 'Fotos', run: true, art: '<rect x="2" y="2" width="16" height="16" rx="2" fill="#2780d8"/><path fill="#7cc8fb" d="M2 17l8-8 8 8z"/><circle cx="14" cy="6" r="1.500" fill="#fff"/>' },
  { name: 'OBS', run: true, art: '<circle cx="9" cy="11" r="7" fill="#222" stroke="#ccc"/><path fill="none" stroke="#ccc" stroke-width="1.500" d="M9 10c-3-1-2-4 0-4M9 11c3-2 5 0 4 2M8 12c0 3-3 3-4 1"/><circle cx="16" cy="4" r="4" fill="#f00d12"/>' },
]
</script>

<template>
  <div class="desktop">
    <header class="titlebar">
      <svg class="logo" viewBox="0 0 20 20" fill="none" stroke="#0f639c" stroke-width="2"><path d="M3 6l7-4 7 4v8l-7 4-7-4zM3 6l7 4 7-4M10 10v8M6 8v8M14 8v8" /></svg>
      <h1>VESTIER A CORTE1* - SketchUp 2025</h1>
      <div class="winbtns">
        <button aria-label="Minimizar"><svg viewBox="0 0 10 10"><path d="M1 5h8" stroke="#aaa" /></svg></button>
        <button aria-label="Restaurar"><svg viewBox="0 0 10 10" fill="none" stroke="#333"><path d="M2 3.500h5v5H2zM4 3V1.500h4.500V7H7" /></svg></button>
        <button aria-label="Cerrar"><svg viewBox="0 0 10 10" stroke="#222"><path d="M2 2l6 6M8 2L2 8" /></svg></button>
      </div>
    </header>
    <nav class="menu"><button v-for="m in menus" :key="m">{{ m }}</button></nav>

    <section class="toolbars">
      <div class="row">
        <span class="grip first"></span>
        <button class="tool" aria-label="Sombras"><svg viewBox="0 0 16 16" stroke="#345" v-html="glyphs.sun"></svg></button>
        <div class="slide">
          <input v-model="month" class="warm" type="range" aria-label="Mes">
          <div class="ticks"><span v-for="(m, i) in months" :key="i">{{ m }}</span></div>
        </div>
        <div class="slide">
          <input v-model="hour" class="cool" type="range" aria-label="Hora">
          <div class="ticks"><span>07:35 AM</span><span>Mediodía</span><span>05:33 PM</span></div>
        </div>
        <span class="grip"></span>
        <template v-for="(t, i) in row1" :key="i">
          <button v-if="t.kind === 'icon'" class="tool" :aria-label="t.name"><svg viewBox="0 0 16 16" :stroke="t.stroke" :fill="t.fill" v-html="glyphs[t.name]"></svg></button>
          <span v-else :class="t.kind"></span>
        </template>
      </div>
      <div v-for="(row, r) in rowsBelow" :key="r" class="row">
        <span class="grip first"></span>
        <template v-for="(t, i) in row" :key="i">
          <button v-if="t.kind === 'icon'" class="tool" :aria-label="t.name"><svg viewBox="0 0 16 16" :stroke="t.stroke" :fill="t.fill" v-html="glyphs[t.name]"></svg></button>
          <button v-else-if="t.kind === 'label'" class="tool label" :class="t.cls">{{ t.name }}</button>
          <span v-else :class="[t.kind, t.cls]"></span>
        </template>
      </div>
    </section>

    <main class="work">
      <aside class="palette">
        <div v-for="(g, i) in palette" :key="i" class="pgroup">
          <button v-for="(t, j) in g" :key="j" class="tool" :aria-label="t.name"><svg viewBox="0 0 16 16" :stroke="t.stroke" :fill="t.fill" v-html="glyphs[t.name]"></svg></button>
        </div>
      </aside>

      <section class="canvas">
        <svg viewBox="35 124 972 530" preserveAspectRatio="xMidYMid meet" stroke-linejoin="round">
          <g transform="translate(190 320) scale(.33333)" stroke="#1b140d" stroke-width="2.500" fill="#d3ae82">
            <path fill="#e2c49c" d="M20 228l8-6h55v22H20z" /><path fill="#b08a60" d="M20 228h62l-2-6H28z" />
            <path fill="#5d452f" d="M50 54l10-9 250-3-6 18-59-4z" />
            <path fill="#b48f66" d="M70 103h84l10 169H85z" />
            <path fill="#3a2b1d" d="M70 103h13l13 168H85z" />
            <path fill="#d3ae82" d="M84 105h20v18H86zM87 131h22v18H89zM90 159h24v20H92zM92 189h18v18H94zM94 217h18v18H96zM96 244h18v22H98zM108 105h46v18h-46zM114 130h44v17h-44zM117 157h42v20h-42zM112 191h48v18h-48zM114 213h47v15h-47zM115 232h47v14h-47zM116 250h48v17h-48z" />
            <path d="M50 56l101-2 4 47-103 2zM151 54l94 1 4 44-94 2z" />
            <path d="M155 101l49-2 14 172-52 1zM204 99l45-1 10 172-41 1z" />
            <path d="M85 272l175-2v6l-175 3z" />
            <path fill="#5d452f" d="M303 60l7-18 3 58 12 140-3 35-12 12z" /><path fill="#b48f66" d="M307 125l6 0 2 25-6 0zM310 170l6-2 2 25-6 0zM313 213l6-2 0 25-6 0z" stroke-width="2" />
            <path d="M247 60h56l3 46-56-1zM249 105l57 2 5 170-50-2zM262 277l50 1-2 9h-45z" />
          </g>
          <g transform="translate(190 320) scale(.33333)" stroke="#1b140d" stroke-width="2.500" fill="#d3ae82">
            <path fill="#8a6b48" d="M527 57l2-9 131-2v11z" />
            <path d="M527 58h108l3 220H536zM634 57h27l5 218-26 3z" />
            <path d="M527 58h108v43l-106 2zM530 103h56v78h-54zM586 103h50v78h-50z" />
            <path fill="none" stroke-width="4" d="M587 127h50M587 138h50M587 154h50M587 165h50" />
            <path fill="#292929" d="M532 191h106v43H534zM586 244h52v20h-52zM535 252h50v16h-50z" /><path fill="none" stroke="#050505" d="M586 190v80M534 212h104" />
            <path fill="none" stroke-width="6" d="M536 236h102M536 252h102M536 270h102" />
          </g>
          <g transform="translate(190 320) scale(.33333)" stroke="#1b140d" stroke-width="3" fill="#c69e72">
            <path fill="#fff" d="M752 62h190l-2 200H752z" />
            <path d="M751 64h32v196h-30zM868 63h74v198h-74zM751 265l191-5v14l-190 6z" />
            <path fill="#5a422c" d="M745 60l4-5 194-1v9l-196 3z" />
            <path fill="none" stroke="#0d0b09" stroke-width="4" d="M785 65v196M803 65v48M802 118v46M802 168v40M802 215v44M818 65v194M835 65v194M849 65v194M866 65v196M785 113h18M785 165h18M785 212h18M849 113h18M849 165h18M849 212h18M785 260h84M788 262v18" />
            <path stroke="none" fill="#b98f64" d="M903 68h14v185h-14z" opacity=".55" />
          </g>
          <g transform="translate(590 320) scale(.33333)" stroke="#17120d" stroke-width="3" fill="#dcb48a">
            <path d="M34 35l78-3 3 35-74 3-1 178H30z" />
            <path fill="#fff" stroke="none" d="M186 32h175v175H186z" />
            <path fill="#c5c7c9" d="M190 31l184-2v24H190zM253 31v24M313 31v24M188 163h62v24h-62z" />
            <path d="M190 57h145v103H188zM335 55h33v24h-33z" />
            <path fill="none" stroke-width="6" d="M335 57v24M345 55v24M186 205l70-5M158 211l98-5" />
            <path d="M108 33h30v210h-30zM160 33h30v210h-32z" /><path fill="#96734f" d="M108 33l10 5v15h20v-15M108 33v210h6V60z" />
            <path fill="#1b1b1b" d="M139 32h23l-3 206h-20z" /><path stroke="#4c4c4c" fill="none" d="M142 100h18M142 125h18M142 152h18M142 182h18" />
            <path fill="none" stroke-width="5" d="M112 32l262-3" />
            <path fill="#171717" d="M210 235l40-2 5 42 135-2v38l-136 2-44-45z" />
            <path fill="#262626" d="M258 79l155-3-11 201-150-2z" /><path fill="#2b2b2b" d="M252 276h138v35H256z" />
            <path fill="none" stroke="#000" d="M211 250l45 45M220 262v14M232 270v16M244 282v16" />
            <path d="M402 258l12-6 36 2v20l-48-2z" /><path fill="#7b5d40" d="M402 262h48v6h-48z" />
          </g>
          <g fill="#c9c9c9">
            <path d="M874 545l34-16 59 31-6 1-54-26-18 10v34h14v-12h6v18h-28v-33l-7 2z" />
            <path d="M881 584h109v2H881zM912 579h67v1h-67zM925 515h2v69h-2zM935 532h2v69h-2z" />
            <path fill="#fff" d="M908 533l52 28h-5l-47-24z" />
            <text class="brand" x="909" y="577">INMOBEX</text>
          </g>
          <path fill="#14293a" stroke="#88a" stroke-width=".5" d="M933 551v10l2-2 2 4 2-1-2-4h3z" />
        </svg>
      </section>

      <aside class="tray">
        <header class="trayhead"><h2>MAT/COMP</h2><button aria-label="Fijar">⊼</button><button aria-label="Cerrar bandeja">×</button></header>
        <div class="traybody">
          <div class="panels">
            <div class="phead"><svg viewBox="0 0 10 10"><path d="M1 3l4 4 4-4" fill="none" stroke="#445" /></svg><h3>Materiales</h3><button aria-label="Cerrar Materiales">×</button></div>
            <div class="mat">
              <div class="preview"><div class="magma"></div><button aria-label="Generar"><svg viewBox="0 0 18 18" fill="#12304a"><path d="M10 6l1.200 3.800L15 11l-3.800 1.200L10 16l-1.200-3.800L5 11l3.800-1.200zM5 4l.6 1.400L7 6l-1.400.6L5 8l-.6-1.400L3 6l1.400-.6zM8.500 2l.5 1 1 .5-1 .5-.5 1-.5-1-1-.5 1-.5z" /></svg></button></div>
              <div class="namerow"><label for="mname">Nombre</label><input id="mname" v-model="materialName" type="text"><svg viewBox="0 0 12 12" fill="#fff" stroke="#8591a8"><path d="M1.500 1.500h5v7h-5zM5.500 3.500h5v7h-5zM7 6h2M7 8h2" /></svg></div>
              <div class="tabs matTabs">
                <button class="on">Seleccionar</button><button class="white">Edición</button>
                <span class="grow"></span>
                <svg viewBox="0 0 12 12" fill="#333"><path d="M8 1l3 3-2 2-3-3zM6 4l2 2-5 5-2 .5.500-2z" /></svg>
                <svg viewBox="0 0 12 12" fill="#111"><path d="M2 5h8v7H2zM3 1h6L6 4z" /><path stroke="#fff" d="M6 6.500v4M4 8.500h4" /></svg>
              </div>
              <div class="combo">
                <svg viewBox="0 0 12 12" fill="none" stroke="#222"><circle cx="6" cy="6" r="5" /><path d="M6 3v6M3 6h6" stroke-width="1.500" /></svg>
                <svg viewBox="0 0 12 12" fill="none" stroke="#222"><path d="M4 1h4l3 5-3 5H4L1 6z" /><circle cx="6" cy="6" r="2.500" /></svg>
                <svg viewBox="0 0 12 12" fill="#fff" stroke="#111" stroke-width="1.300"><path d="M2 6v5h8V6M.5 7L6 1.500 11.500 7M5 11V8h2v3" /></svg>
                <span class="picker"><select aria-label="Biblioteca"><option>Madera</option></select></span>
                <svg viewBox="0 0 12 12"><path fill="#112" d="M5 1l6 5-6 5z" /><path fill="#9bc" stroke="#123" d="M1 3h5v6H1z" /></svg>
              </div>
              <div class="swatches">
                <button v-for="(w, i) in woods" :key="i" :class="{ on: w.on }" :aria-label="'Madera ' + (i + 1)">
                  <svg viewBox="0 0 30 30"><path fill="#3f4040" d="M0 0h30v30H0z" /><path :fill="w.top" d="M15 2l12 6-12 7L3 8z" /><path :fill="w.left" d="M3 8l12 7v13L5 22z" /><path :fill="w.right" d="M27 8l-12 7v13l10-6z" /></svg>
                </button>
              </div>
            </div>
            <div class="phead"><svg viewBox="0 0 10 10"><path d="M1 3l4 4 4-4" fill="none" stroke="#445" /></svg><h3>Componentes</h3><button aria-label="Cerrar Componentes">×</button></div>
            <div class="comp">
              <div class="cthumb"><svg viewBox="0 0 36 36" stroke="#2a2a24" stroke-width="2" stroke-linejoin="round">
                <g id="cb"><path fill="#e3e4cf" d="M18 1l8 3-8 4-7-4z" /><path fill="#a9ab94" d="M11 4l7 4v9l-7-3z" /><path fill="#8d8f79" d="M26 4l-8 4v9l8-3z" /></g>
                <use href="#cb" x="-9" y="15" /><use href="#cb" x="8" y="17" /></svg></div>
              <div class="cfields"><input v-model="compName" type="text" aria-label="Nombre del componente"><textarea v-model="compText" aria-label="Descripción"></textarea></div>
              <div class="cside">
                <svg viewBox="0 0 12 12" fill="#111"><path d="M2 5h8v7H2zM3 1h6L6 4z" /><path stroke="#fff" d="M6 6.500v4M4 8.500h4" /></svg>
                <svg viewBox="0 0 16 16" fill="#bbb" stroke="#555"><path d="M8 3l3 1.500v3L8 9 5 7.500v-3zM5 8l3 1.500v3L5 14l-3-1.500v-3zM11 8l3 1.500v3L11 14l-3-1.500v-3z" /></svg>
              </div>
            </div>
            <div class="tabs compTabs"><button class="on">Seleccionar</button><button class="white">Edición</button><button class="white">Estadísticas</button></div>
            <div class="searchrow">
              <svg viewBox="0 0 12 12" fill="#999" stroke="#222" stroke-width=".8"><path d="M1 2h2v2H1zM4.500 2h2v2h-2zM8 2h2v2H8zM1 5.500h2v2H1zM4.500 5.500h2v2h-2zM8 5.500h2v2H8zM1 9h2v2H1zM4.500 9h2v2h-2zM8 9h2v2H8z" /></svg>
              <svg viewBox="0 0 12 12" fill="#fff" stroke="#111" stroke-width="1.300"><path d="M2 6v5h8V6M.5 7L6 1.500 11.500 7M5 11V8h2v3" /></svg>
              <button class="drop" aria-label="Colecciones">▾</button>
              <input v-model="search" type="text" placeholder="3D Warehouse" aria-label="Buscar en 3D Warehouse">
              <svg viewBox="0 0 12 12" fill="none" stroke="#333"><circle cx="7.500" cy="4" r="2.500" /><path d="M6 6l-4 5" /></svg>
              <svg viewBox="0 0 12 12"><path fill="#112" d="M5 1l6 5-6 5z" /><path fill="#9bc" stroke="#123" d="M1 3h5v6H1z" /></svg>
            </div>
            <div class="thumbs"><button v-for="(t, i) in thumbs" :key="i" :aria-label="'Componente ' + (i + 1)"><svg viewBox="0 0 34 26" stroke="#888" stroke-width=".7" v-html="t"></svg></button></div>
          </div>
          <div class="scroll"><span>▴</span><i></i><span>▾</span></div>
        </div>
        <nav class="traytabs"><button v-for="t in trayTabs" :key="t" :class="{ on: t === 'MAT/COMP' }">{{ t }}</button></nav>
      </aside>
    </main>

    <div class="bottombar">
      <template v-for="(t, i) in bottomTools" :key="i">
        <button v-if="t.kind === 'icon'" class="tool" :aria-label="t.name"><svg viewBox="0 0 16 16" :stroke="t.stroke" :fill="t.fill" v-html="glyphs[t.name]"></svg></button>
        <button v-else-if="t.kind === 'label'" class="tool label" :class="t.cls">{{ t.name }}</button>
        <span v-else :class="t.kind"></span>
      </template>
    </div>
    <footer class="status"><p>Haz clic o arrastra para seleccionar objetos. Mayúsculas = Añadir/Sustraer. Ctrl = Añadir. Mayúsculas + Ctrl = Sustraer.</p><output aria-label="Medidas"></output></footer>

    <footer class="taskbar">
      <div class="weather">
        <svg viewBox="0 0 16 16"><circle cx="7" cy="7" r="6" fill="#f5a32a" /><path fill="#dfe8f6" d="M6 14c-2-1-1-4 1-4 1-3 5-2 5 0 4 0 4 4 1 4z" /></svg>
        <p>22°C<br>Mayorm. soleado</p>
      </div>
      <div class="center">
        <button class="start" aria-label="Inicio"><svg viewBox="0 0 16 16" fill="#4cc2f5"><path d="M0 0h7.500v7.500H0zM8.500 0H16v7.500H8.500zM0 8.500h7.500V16H0zM8.500 8.500H16V16H8.500z" /></svg></button>
        <label class="find"><svg viewBox="0 0 12 12" fill="none" stroke="#eee" stroke-width="1.300"><circle cx="5" cy="5" r="3.800" /><path d="M8 8l3.500 3.500" /></svg><input type="text" placeholder="Buscar" aria-label="Buscar"></label>
        <div class="apps">
          <button v-for="a in apps" :key="a.name" :class="{ run: a.run, active: a.active }" :aria-label="a.name"><svg viewBox="0 0 20 20" v-html="a.art"></svg></button>
        </div>
      </div>
      <div class="systray">
        <svg viewBox="0 0 12 12" fill="none" stroke="#eee" stroke-width="1.300"><path d="M3 8l3-3 3 3" /></svg>
        <svg viewBox="0 0 12 12" fill="#5b5fc7"><circle cx="6.500" cy="2.500" r="2" /><circle cx="10" cy="3.500" r="1.500" /><path d="M1 5h11v4l-3 3H4L1 10z" /><path d="M2.500 6.500h3M4 6.500V10" stroke="#fff" /></svg>
        <svg viewBox="0 0 12 12" fill="none" stroke="#c77a70"><path d="M4.500 1.500h3v5h-3zM3 5c0 5 6 5 6 0M6 9v2.500" /></svg>
        <p class="lang">ESP<br>ES</p>
        <svg viewBox="0 0 12 12" fill="none" stroke="#eee"><path d="M7 2H1v7h7V7M3 11h4M8.500 1.500h3v3h-3zM10 5v3" /></svg>
        <svg class="vol" viewBox="0 0 12 12" fill="none" stroke="#eee"><path d="M1 4.500h2L6 2v8L3 7.500H1zM8 4c1 1 1 3 0 4M9.500 2.500c2 2 2 5 0 7" /></svg>
        <p class="clock">10:34<br>23/3/2026</p>
        <svg viewBox="0 0 12 12" fill="none" stroke="#eee"><path d="M2 9h7l-1-2V4M2 9l1-2V4c0-2 3-3 4-2M5 11h2M6 4h3L6 7h3M9 1h2L9 3h2" /></svg>
      </div>
    </footer>

    <div class="peek">
      <div class="ptitle"><svg viewBox="0 0 20 20" v-html="chrome"></svg><span>Yisus19ojeda Stream - Wat...</span></div>
      <svg class="pview" viewBox="0 0 134 73" preserveAspectRatio="none">
        <path fill="#020202" d="M0 0h134v73H0z" /><path fill="#252b4a" d="M0 2h134v7H0z" />
        <path fill="#0d0e10" d="M0 9h18v64H0zM110 9h24v64h-24z" />
        <path stroke="#777" stroke-dasharray="3 2 6 3 2 4" stroke-width=".7" d="M2 1h84M2 5h90M122 5h10M52 11h30" />
        <path stroke="#37d63b" stroke-width="2" d="M5 11h5M2 21h3M128 70h4M111 65h22" stroke-dasharray="2 1" /><circle cx="22" cy="68" r="2.500" fill="#39d23c" />
        <path stroke="#aaa" stroke-width="1" stroke-dasharray="5 8" d="M2 16h12M2 26h14M2 34h14M2 38h14M2 42h14M2 46h14M2 50h14M2 54h14M2 58h14M2 62h14M119 11h13" />
        <path stroke="#777" stroke-dasharray="3 1" d="M112 17h20M112 20h20M112 22h12M92 67h14" /><path stroke="#39d23c" d="M26 66h10M26 69h6" />
      </svg>
    </div>
  </div>
</template>

<style>
html, body { margin: 0; background: #f0f0f4; }
</style>

<style scoped>
.desktop { position: relative; display: flex; flex-direction: column; height: 100vh; min-height: 600px; overflow: hidden; background: #f0f0f5; color: #333; font: 8px/12px "Noto Sans", "Open Sans", sans-serif; }
button { border: 0; padding: 0; margin: 0; background: none; font: inherit; color: inherit; }
input, select, textarea { font: inherit; color: inherit; margin: 0; box-sizing: border-box; border-radius: 0; }
h1, h2, h3, p { margin: 0; font: inherit; }
svg { display: block; flex: none; }
.titlebar { display: flex; align-items: center; height: 15px; padding-left: 2px; gap: 4px; flex: none; }
.titlebar h1 { color: #222; }
.logo { width: 10px; height: 10px; }
.winbtns { display: flex; margin-left: auto; padding-right: 2px; }
.winbtns button { width: 30px; display: flex; justify-content: center; }
.winbtns svg { width: 10px; height: 10px; }
.menu { display: flex; gap: 9px; height: 15px; box-sizing: border-box; align-items: center; padding-left: 7px; border-bottom: 1px solid #dadae0; flex: none; }
.toolbars { flex: none; border-bottom: 1px solid #dcdce2; overflow: hidden; }
.row { display: flex; align-items: center; height: 19px; box-sizing: border-box; border-bottom: 1px solid #e6e6eb; width: max-content; border-right: 1px solid #e0e0e6; }
.row:last-child { height: 18px; border-bottom: 0; }
.tool { width: 16px; height: 16px; flex: none; display: flex; align-items: center; justify-content: center; }
.tool svg { width: 16px; height: 16px; }
.sep { width: 4px; height: 8px; flex: none; background: linear-gradient(90deg, transparent 1px, #aaa 1px, #aaa 2px, transparent 2px); }
.grip { width: 9px; height: 14px; flex: none; background: radial-gradient(circle, #c8c8ce 1px, transparent 1px) 3px 0 / 3px 3px; background-clip: content-box; box-sizing: border-box; padding: 0 2px; }
.grip.first { width: 7px; }
.wide.far { width: 286px; }
.wide.mid { width: 79px; }
.label { white-space: nowrap; font-family: "Liberation Sans", Arial, sans-serif; color: #111; }
.label.y { background: #fbff1d; font-size: 12px; }
.label.t { background: #fff; border: 1px solid #333; box-sizing: border-box; font-size: 14px; height: 15px; }
.label.g, .label.d { width: 12px; height: 12px; margin: 0 2px; box-sizing: border-box; font-size: 9px; background: #fff; border: 1px solid #2424b8; color: #2424b8; }
.label.d { border-color: #c01828; color: #901020; }
.label.r { font-size: 11px; font-weight: 700; color: #0b0ba8; }
.label.v, .label.w { font-size: 7px; line-height: 7px; white-space: normal; color: #5050d0; }
.label.w { color: #d05070; }
.label.a0, .label.a1, .label.a2, .label.ax { font-size: 9px; line-height: 8px; flex-direction: column; color: #666; }
.label.a0::after, .label.a1::after, .label.a2::after, .label.ax::after { content: ''; width: 5px; height: 5px; border-radius: 3px; background: #333; }
.label.a1, .label.a2 { color: #e0a020; }
.label.a1::after, .label.a2::after { background: #111; box-shadow: 0 0 0 1px #f4ec3a; }
.label.ax { color: #c01020; }
.label.ax::after { background: #b01020; }
.label.p { font-size: 6px; background: #fff; outline: 1px dashed #444; outline-offset: -1px; height: 15px; }
.label.h { font-size: 6px; line-height: 7px; font-weight: 700; color: #c8283c; white-space: normal; background: #fff; }
.slide { width: 116px; margin-left: 6px; display: flex; flex-direction: column; gap: 2px; }
.slide + .slide { margin: 0 2px 0 11px; }
.slide input { appearance: none; width: 100%; height: 4px; }
.warm { background: linear-gradient(90deg, #f4efe0, #e8a838 33%, #d42020 70%, #f3c4c8); }
.cool { background: linear-gradient(90deg, #f0f0f4, #8aa0d8 40%, #4a50b8 65%, #181828); }
.slide input::-webkit-slider-thumb { appearance: none; width: 4px; height: 8px; background: #fff; border: 1px solid #c8b8b8; }
.ticks { display: flex; justify-content: space-between; padding: 0 1px 0 4px; font-size: 7px; line-height: 8px; color: #444; }
.work { flex: 1; display: flex; min-height: 0; }
.palette { width: 35px; flex: none; padding: 7px 0 0 1px; box-sizing: border-box; }
.pgroup { display: grid; grid-template-columns: 16px 16px; grid-auto-rows: 16px; padding-bottom: 1px; margin-bottom: 2px; border-bottom: 1px solid #999; width: 32px; }
.pgroup:last-child { border: 0; }
.pgroup .tool svg { width: 14px; height: 14px; }
.canvas { position: relative; flex: 1; min-width: 0; background: #fff; }
.canvas > svg { position: absolute; inset: 0; width: 100%; height: 100%; }
.brand { font: 700 14px "Liberation Sans", Arial, sans-serif; }
.tray { width: 271px; flex: none; margin-left: 2px; display: flex; flex-direction: column; background: #f3f5f9; border-left: 1px solid #d5d5dd; box-sizing: border-box; }
.trayhead { display: flex; align-items: center; height: 19px; padding: 0 1px 0 3px; background: #f0f0f5; border-bottom: 1px solid #ccc; gap: 4px; flex: none; }
.trayhead h2 { font-weight: 700; flex: 1; }
.trayhead button { width: 8px; height: 8px; border: 1px solid #888; line-height: 6px; box-sizing: border-box; font-size: 7px; }
.traybody { flex: 1; display: flex; min-height: 0; }
.panels { flex: 1; min-width: 0; overflow: hidden; display: flex; flex-direction: column; background: #f4f8fb; }
.phead { display: flex; align-items: center; height: 17px; margin-top: 1px; background: #e0e0ea; padding: 0 2px 0 4px; gap: 4px; flex: none; }
.phead h3 { flex: 1; color: #555; }
.phead svg { width: 9px; height: 9px; }
.phead button { width: 12px; height: 13px; background: #fff; border: 1px solid #bbb; line-height: 10px; box-sizing: border-box; }
.mat { padding: 12px 5px 10px; display: flex; flex-direction: column; flex: 1; min-height: 0; }
.preview { height: 100px; flex: none; margin: 0 24px; background: #444; border: 1px solid #111; display: grid; grid-template-columns: 1fr 2fr 1fr; box-sizing: border-box; }
.magma { grid-column: 2; background: linear-gradient(120deg, #242222, #2b2727 30%, #232122 60%, #2a2727); }
.preview button { grid-column: 3; width: 20px; height: 20px; background: #fff; border-radius: 2px; place-self: end; margin: 0 10px 9px 0; display: flex; align-items: center; justify-content: center; }
.preview button svg { width: 18px; height: 18px; }
.namerow { display: flex; align-items: center; padding: 5px 11px 10px 8px; gap: 7px; border-bottom: 1px solid #ccd2da; margin-bottom: 8px; }
.namerow label { width: 30px; color: #555; }
.namerow input { flex: 1; min-width: 0; height: 16px; border: 1px solid #bbb; border-radius: 2px; padding: 0 2px; background: #fff; margin-right: 3px; }
.namerow svg { width: 11px; height: 11px; }
.tabs { display: flex; align-items: stretch; height: 18px; flex: none; border-bottom: 1px solid #d4d8dd; }
.tabs button { padding: 0 7px; color: #555; border: 1px solid #e0e3e8; border-bottom: 0; }
.tabs .white { background: #fff; color: #333; }
.tabs .grow { flex: 1; }
.tabs svg { width: 12px; height: 12px; margin: 1px 3px 0 2px; }
.combo { display: flex; align-items: center; height: 18px; gap: 5px; padding: 0 3px; flex: none; }
.combo svg { width: 12px; height: 12px; }
.picker { flex: 1; position: relative; display: flex; margin-left: -2px; }
.picker::after { content: ''; position: absolute; right: 6px; top: 7px; border: 3px solid transparent; border-top-color: #777; }
.picker select { appearance: none; flex: 1; height: 17px; border: 1px solid #bbb; background: #fff; padding: 0 3px; }
.swatches { flex: 1; background: #fff; border: 1px solid #ccc; display: flex; align-items: flex-start; gap: 1px; padding: 1px; border-right: 9px solid #f2f3f7; min-height: 0; }
.swatches button { width: 34px; height: 34px; border: 1px solid transparent; box-sizing: border-box; display: flex; align-items: center; justify-content: center; }
.swatches .on { border: 2px solid #1c6cb8; }
.swatches svg { width: 30px; height: 30px; outline: 1px solid #111; outline-offset: -1px; }
.comp { display: flex; height: 56px; margin: 1px 0 0 1px; gap: 2px; flex: none; }
.cthumb { width: 56px; border: 1px solid #aaa; background: #fff; display: flex; align-items: center; justify-content: center; box-sizing: border-box; }
.cthumb svg { width: 36px; height: 36px; }
.cfields { flex: 1; display: flex; flex-direction: column; min-width: 0; }
.cfields input { height: 16px; border: 1px solid #bbb; background: #fff; }
.cfields textarea { flex: 1; border: 1px solid #ddd; border-top: 0; background: #fff; resize: none; }
.cside { width: 17px; padding-top: 2px; display: flex; flex-direction: column; gap: 5px; align-items: center; }
.cside svg { width: 10px; height: 10px; }
.compTabs { margin-top: 6px; }
.searchrow { display: flex; align-items: center; height: 17px; padding: 0 3px 0 1px; gap: 4px; flex: none; }
.searchrow svg { width: 12px; height: 12px; }
.searchrow input { flex: 1; min-width: 0; height: 16px; border: 1px solid #bbb; background: #fff; padding: 0 2px; margin-left: -4px; }
.searchrow input::placeholder { color: #999; }
.drop { width: 9px; color: #111; }
.thumbs { height: 26px; display: flex; gap: 1px; padding: 1px 0 0 1px; flex: none; background: #fff; }
.thumbs button { width: 34px; height: 26px; border: 1px solid #999; border-bottom: 0; box-sizing: border-box; }
.thumbs svg { width: 32px; height: 25px; }
.scroll { width: 11px; background: #fff; border-left: 1px solid #bbb; box-sizing: border-box; display: flex; flex-direction: column; align-items: center; color: #555; line-height: 10px; }
.scroll i { width: 8px; flex: 1; max-height: 284px; margin-bottom: auto; border-bottom: 1px solid #bbb; }
.traytabs { display: flex; height: 18px; box-sizing: border-box; flex: none; border-top: 1px solid #bbb; background: #f0f0f5; margin-bottom: 1px; color: #666; }
.traytabs button { padding: 0 3px; border-right: 1px solid #ccc; white-space: nowrap; background: #ebebef; }
.traytabs .on { background: #fff; }
.bottombar { display: flex; align-items: center; height: 18px; padding-left: 60px; flex: none; }
.status { display: flex; align-items: center; justify-content: space-between; height: 15px; padding: 0 16px 0 10px; flex: none; color: #555; font-family: "Open Sans", "Noto Sans", sans-serif; font-size: 9px; }
.status output { width: 133px; height: 11px; border: 1px solid #ccc; box-sizing: border-box; background: #f5f5f8; }
.taskbar { position: relative; display: flex; align-items: center; justify-content: space-between; height: 32px; flex: none; background: #202124; color: #f2f2f2; line-height: 11px; }
.weather { display: flex; align-items: center; gap: 5px; padding-left: 13px; }
.weather svg { width: 16px; height: 16px; }
.center { position: absolute; left: 50%; top: 0; height: 32px; transform: translateX(-50%); display: flex; align-items: center; gap: 2px; }
.start { width: 29px; display: flex; justify-content: center; }
.start svg { width: 16px; height: 16px; }
.find { width: 147px; height: 22px; border-radius: 11px; background: #3b3c3f; box-sizing: border-box; display: flex; align-items: center; padding: 0 8px; gap: 6px; }
.find svg { width: 11px; height: 11px; }
.find input { flex: 1; min-width: 0; border: 0; background: none; padding: 0; font-size: 9px; color: #ddd; }
.find input::placeholder { color: #ccc; }
.apps { display: grid; grid-template-columns: repeat(21, 1fr); width: 615px; }
.apps button { height: 28px; display: flex; flex-direction: column; align-items: center; justify-content: center; position: relative; border-radius: 3px; }
.apps svg { width: 20px; height: 20px; }
.apps .run::after { content: ''; position: absolute; bottom: 0; width: 4px; height: 2px; border-radius: 1px; background: #999; }
.apps .active { background: #2e2f33; }
.apps .active::after { width: 11px; background: #e0605c; }
.systray { display: flex; align-items: center; gap: 9px; padding-right: 12px; text-align: center; }
.systray svg { width: 12px; height: 12px; }
.systray .vol { margin-left: -5px; }
.lang { padding: 0 1px; }
.clock { text-align: right; }
.clock + svg { margin-left: -5px; }
.peek { position: absolute; left: 56%; bottom: 41px; width: 144px; height: 104px; box-sizing: border-box; padding: 5px; background: #343434; border: 1px solid #555; border-radius: 5px; box-shadow: 0 2px 6px #0005; color: #f0f0f0; }
.ptitle { display: flex; align-items: center; gap: 3px; height: 17px; font: 9px/12px "Open Sans", "Noto Sans", sans-serif; }
.ptitle span { white-space: nowrap; }
.ptitle svg { width: 12px; height: 12px; }
.pview { width: 100%; height: 73px; margin-top: 3px; }
</style>
